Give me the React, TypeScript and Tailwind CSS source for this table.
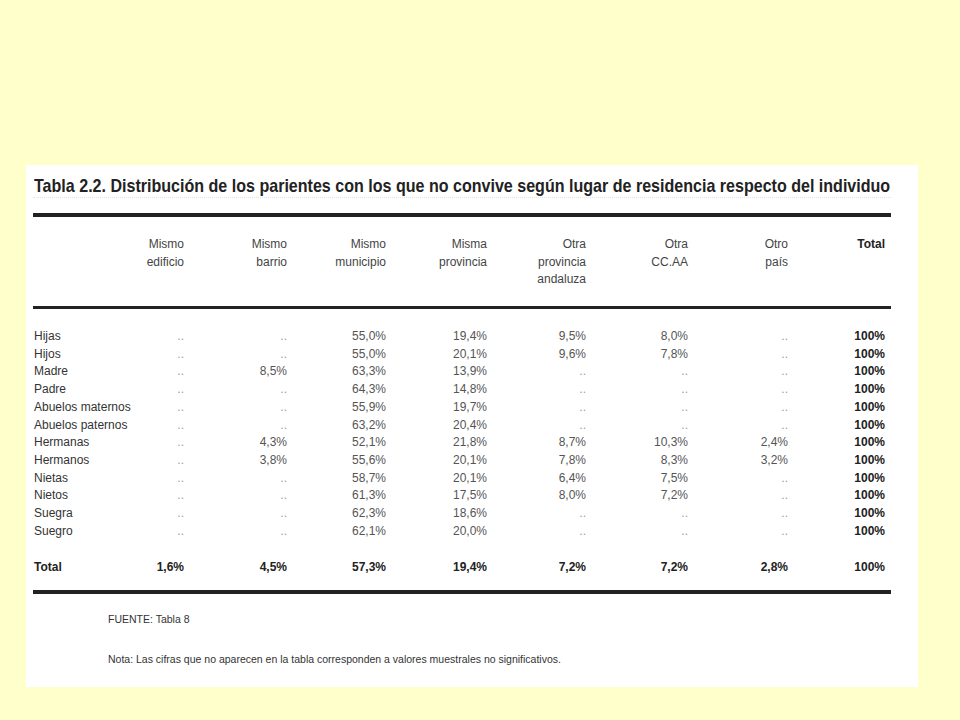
const cols =
  "grid grid-cols-[100px_50px_103px_99px_101px_99px_102px_100px_97px]";

const heads: string[][] = [
  ["Mismo", "edificio"],
  ["Mismo", "barrio"],
  ["Mismo", "municipio"],
  ["Misma", "provincia"],
  ["Otra", "provincia", "andaluza"],
  ["Otra", "CC.AA"],
  ["Otro", "país"],
];

const rows: [string, string[]][] = [
  ["Hijas", ["..", "..", "55,0%", "19,4%", "9,5%", "8,0%", ".."]],
  ["Hijos", ["..", "..", "55,0%", "20,1%", "9,6%", "7,8%", ".."]],
  ["Madre", ["..", "8,5%", "63,3%", "13,9%", "..", "..", ".."]],
  ["Padre", ["..", "..", "64,3%", "14,8%", "..", "..", ".."]],
  ["Abuelos maternos", ["..", "..", "55,9%", "19,7%", "..", "..", ".."]],
  ["Abuelos paternos", ["..", "..", "63,2%", "20,4%", "..", "..", ".."]],
  ["Hermanas", ["..", "4,3%", "52,1%", "21,8%", "8,7%", "10,3%", "2,4%"]],
  ["Hermanos", ["..", "3,8%", "55,6%", "20,1%", "7,8%", "8,3%", "3,2%"]],
  ["Nietas", ["..", "..", "58,7%", "20,1%", "6,4%", "7,5%", ".."]],
  ["Nietos", ["..", "..", "61,3%", "17,5%", "8,0%", "7,2%", ".."]],
  ["Suegra", ["..", "..", "62,3%", "18,6%", "..", "..", ".."]],
  ["Suegro", ["..", "..", "62,1%", "20,0%", "..", "..", ".."]],
];

const totals = ["1,6%", "4,5%", "57,3%", "19,4%", "7,2%", "7,2%", "2,8%", "100%"];

function Cell({ v }: { v: string }) {
  if (v === "..") {
    return <div className="text-right text-[#9a9a9a]">..</div>;
  }
  return <div className="text-right text-[#555]">{v}</div>;
}

export default function App() {
  return (
    <div className="w-[960px] h-[720px] bg-[#ffffcc] pt-[165px] pl-[26px] font-['Liberation_Sans',Arial,sans-serif]">
      <div className="w-[892px] h-[522px] bg-white pt-[10px] pl-[7px] pr-[27px] overflow-hidden">
        {/* title */}
        <div className="h-[23px] pl-[1px] border-b border-dotted border-[#e2e2e2] whitespace-nowrap overflow-hidden">
          <span className="inline-block origin-left scale-x-[0.845] text-[19px] leading-[22px] font-bold text-[#222]">
            Tabla 2.2. Distribución de los parientes con los que no convive según lugar de residencia respecto del individuo
          </span>
        </div>

        <div className="mt-[15px] h-[4px] bg-[#222]" />

        {/* header */}
        <div className={`${cols} h-[89px] pt-[19px] pl-[1px] text-[12px] leading-[17.5px]`}>
          <div />
          {heads.map((h, i) => (
            <div key={i} className="text-right text-[#444]">
              {h.map((l) => (
                <div key={l}>{l}</div>
              ))}
            </div>
          ))}
          <div className="text-right font-bold text-[#222]">Total</div>
        </div>

        <div className="h-[3px] bg-[#222]" />

        {/* body */}
        <div className="pt-[19px] pl-[1px] text-[12px] leading-[17.7px]">
          {rows.map(([label, vals]) => (
            <div key={label} className={cols}>
              <div className="whitespace-nowrap text-[#333]">{label}</div>
              {vals.map((v, i) => (
                <Cell key={i} v={v} />
              ))}
              <div className="text-right font-bold text-[#222]">100%</div>
            </div>
          ))}

          <div className={`${cols} mt-[19px] font-bold text-[#222]`}>
            <div>Total</div>
            {totals.map((t, i) => (
              <div key={i} className="text-right">
                {t}
              </div>
            ))}
          </div>
        </div>

        <div className="mt-[13px] h-[4px] bg-[#222]" />

        {/* notes */}
        <div className="pl-[75px] text-[10.5px] leading-[12px] text-[#333]">
          <div className="mt-[19px]">FUENTE: Tabla 8</div>
          <div className="mt-[28px]">
            Nota: Las cifras que no aparecen en la tabla corresponden a valores muestrales no significativos.
          </div>
        </div>
      </div>
    </div>
  );
}
